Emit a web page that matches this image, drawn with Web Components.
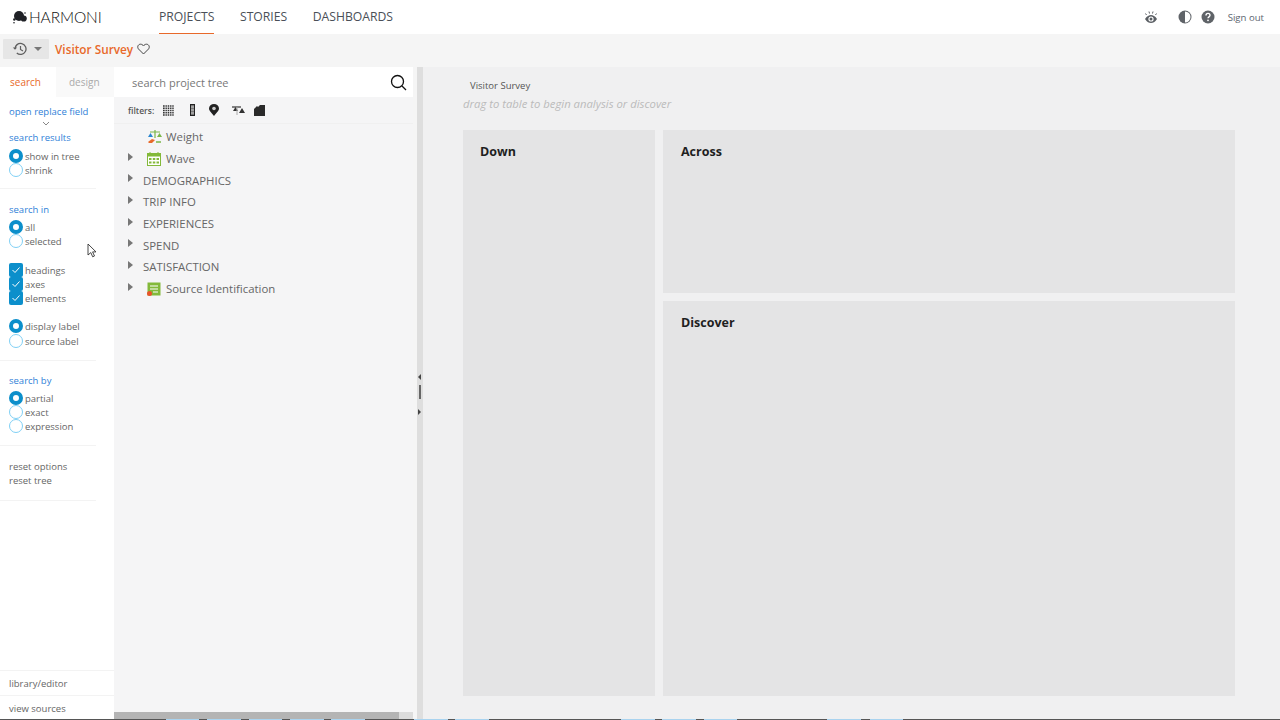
<!DOCTYPE html>
<html><head><meta charset="utf-8"><title>Harmoni</title>
<style>
html,body{margin:0;padding:0;height:100%;overflow:hidden;background:#fff;font-family:"Open Sans","Noto Sans",sans-serif}
</style></head><body>
<hm-app></hm-app>
<script>
const def=(name,css,html)=>customElements.define(name,class extends HTMLElement{
  constructor(){super();this.attachShadow({mode:'open'}).innerHTML=`<style>${css}</style>${html}`;}
});

def('hm-top',`
:host{display:flex;height:34px;background:#fff;align-items:stretch;color:#4a4f57;padding-left:13px}
.logo{display:flex;align-items:center;width:146px;gap:1px;font-size:15.5px;letter-spacing:-.1px;color:#111;font-family:"Lato",sans-serif;font-weight:300}
nav{display:flex;gap:25.5px;font-size:12.2px;font-weight:400}
nav a{display:flex;align-items:center;border-bottom:1px solid transparent;height:33px}
nav a.on{border-bottom-color:#e8692a}
.right{margin-left:auto;display:flex;align-items:center;padding-right:16px;font-size:9.6px;color:#5c6670}
svg{display:block}
`,`
<div class="logo"><svg width="15" height="15" viewBox="0 0 15 15"><circle cx="6" cy="6" r="5" fill="#1f2126"/><circle cx="10.700" cy="8.500" r="3.100" fill="#1f2126"/><circle cx="1.300" cy="9.500" r="1.200" fill="#1f2126"/><circle cx="1" cy="12.800" r=".8" fill="#1f2126"/><circle cx="12" cy="3" r=".8" fill="#1f2126"/></svg><span>HARMONI</span></div>
<nav><a class="on">PROJECTS</a><a>STORIES</a><a>DASHBOARDS</a></nav>
<div class="right">
<svg width="16" height="14" viewBox="0 0 16 14" style="margin-right:19px"><path d="M2 9c2-3 4-4 6-4s4 1 6 4c-2 3-4 4-6 4s-4-1-6-4z" fill="#5b5f64"/><circle cx="8" cy="9" r="2.600" fill="#fff"/><circle cx="8" cy="9" r="1.500" fill="#5b5f64"/><path d="M2.500 3.500l1 1.500M6 1.500l.5 2M10 1.500l-.5 2M13.500 3.500l-1 1.500" stroke="#5b5f64" fill="none"/></svg>
<svg width="14" height="14" viewBox="0 0 14 14" style="margin-right:9px"><circle cx="7" cy="7" r="6.500" fill="#5f6368"/><path d="M7 1.500a5.500 5.500 0 0 1 0 11z" fill="#fff"/></svg>
<svg width="14" height="14" viewBox="0 0 14 14" style="margin-right:13px"><circle cx="7" cy="7" r="6.500" fill="#5f6368"/><path d="M5 5.400c0-1.300 1-2 2-2s2 .7 2 1.900c0 1.500-2 1.600-2 3" fill="none" stroke="#fff" stroke-width="1.400"/><circle cx="7" cy="10.300" r=".9" fill="#fff"/></svg>
<span>Sign out</span></div>`);

def('hm-sub',`
:host{display:flex;height:33px;background:#f5f5f5;align-items:flex-start;padding:5px 0 0 3px;box-sizing:border-box}
.btn{width:46px;height:20px;background:#e6e6e6;display:flex;align-items:center;padding-left:9px;box-sizing:border-box;gap:7px;border-radius:1px;margin-right:6px}
.car{border:4px solid transparent;border-top-color:#777;border-bottom:0}
b{font-weight:600;font-size:11.800px;line-height:20px;color:#e8692a;margin-right:4px}
svg{display:block}
.h{margin-top:4px}
`,`<div class="btn"><svg width="15" height="14" viewBox="0 0 15 14"><path d="M3 7a5.500 5.500 0 1 1 1.800 4" fill="none" stroke="#5f5f5f" stroke-width="1.300"/><path d="M.8 5.500l2.200 2.300 2.200-2.300" fill="#5f5f5f"/><path d="M8.500 4v3.500l2.500 1.500" fill="none" stroke="#5f5f5f" stroke-width="1.200"/></svg><span class="car"></span></div>
<b>Visitor Survey</b><svg class="h" width="13" height="12" viewBox="0 0 13 12"><path d="M6.500 11L1.500 6C0 4.300.8 1.300 3.500 1.200c1.400 0 2.400.8 3 1.800.6-1 1.600-1.800 3-1.800 2.700.1 3.500 3.100 2 4.800z" fill="none" stroke="#444" stroke-width="1"/></svg>`);

def('hm-radio',`
:host{display:flex;align-items:center;height:14px;font-size:9.500px;color:#666}
i{width:14px;height:14px;box-sizing:border-box;border-radius:50%;border:1px solid #7fd0f5;margin-left:9px;margin-right:2px;flex:none;background:#fff}
:host([on]) i{border:4px solid #0c8fcb}
`,`<i></i><slot></slot>`);

def('hm-check',`
:host{display:flex;align-items:center;height:14px;font-size:9.500px;color:#666}
i{width:14px;height:14px;box-sizing:border-box;border-radius:2px;background:#0c8fcb;margin-left:9px;margin-right:2px;flex:none;display:flex;align-items:center;justify-content:center}
svg{display:block}
`,`<i><svg width="10" height="8" viewBox="0 0 10 8"><path d="M1.500 4l2.500 2.500 4.500-5" stroke="#fff" stroke-width="1" fill="none"/></svg></i><slot></slot>`);

def('hm-group',`
:host{display:block;padding:0 0 12px;margin:0 18px 0 0;position:relative;border-bottom:1px solid #f3f3f3}
h4{margin:0 0 3px 9px;font-weight:400;font-size:9.500px;line-height:14px;color:#2f7fd8}
:host([wide]) h4{margin-bottom:4px}
:host([notitle]) h4{display:none}
`,`<h4><slot name="t"></slot></h4><slot></slot>`);

def('hm-left',`
:host{display:flex;flex-direction:column;width:114px;flex:none;background:#fff;font-size:9.500px;color:#666;position:relative;height:100%}
.tabs{display:flex;height:30px;flex:none;font-size:10px;align-items:center}
.tabs span{flex:1;height:30px;display:flex;align-items:center;box-sizing:border-box}
.tabs .a{color:#e8692a;padding-left:10px;flex:0 0 56px}
.tabs .b{color:#aaa;background:#f9f9f9;padding-left:13px}
.rep{color:#2f7fd8;margin:8px 0 0 9px;line-height:14px;height:14px}
.chev{height:12px;margin-left:42px}
.chev svg{display:block;margin-top:2px}
.sp{height:14px;flex:none}
.sp13{height:13px;flex:none}
.spa{height:15px}
.spb{height:14px}
.mt{margin-top:1px}
.act{padding:0 0 0 9px;line-height:14px}
.foot{margin-top:auto}
.foot div{height:25px;border-top:1px solid #f3f3f3;display:flex;align-items:center;padding-left:9px;box-sizing:border-box}
.cursor{position:absolute;left:87px;top:176px}
`,`
<div class="tabs"><span class="a">search</span><span class="b">design</span></div>
<div class="rep">open replace field</div>
<div class="chev"><svg width="8" height="5" viewBox="0 0 8 5"><path d="M1 1l3 3 3-3" fill="none" stroke="#888"/></svg></div>
<hm-group wide style="padding-bottom:11px"><span slot="t">search results</span><hm-radio on>show in tree</hm-radio><hm-radio>shrink</hm-radio></hm-group>
<div class="sp"></div>
<hm-group><span slot="t">search in</span>
<hm-radio on>all</hm-radio><hm-radio>selected</hm-radio>
<div class="spa"></div>
<hm-check>headings</hm-check><hm-check>axes</hm-check><hm-check>elements</hm-check>
<div class="spb"></div>
<hm-radio on>display label</hm-radio><hm-radio class="mt">source label</hm-radio>
</hm-group>
<div class="sp13"></div>
<hm-group><span slot="t">search by</span><hm-radio on>partial</hm-radio><hm-radio>exact</hm-radio><hm-radio>expression</hm-radio></hm-group>
<div class="sp"></div>
<hm-group notitle><div class="act">reset options</div><div class="act">reset tree</div></hm-group>
<div class="foot"><div>library/editor</div><div>view sources</div></div>
<svg class="cursor" width="10" height="15" viewBox="0 0 10 15"><path d="M1 1v11l2.800-2.400 1.900 4.200 1.800-.8-1.900-4.100H9z" fill="#fff" stroke="#333" stroke-width=".9"/></svg>`);

def('hm-row',`
:host{display:flex;align-items:center;height:21.700px;font-size:11.400px;color:#666;position:relative;padding-left:29px}
.arr{position:absolute;left:14px;top:5px;border-left:5px solid #777;border-top:4px solid transparent;border-bottom:4px solid transparent}
:host([noarrow]) .arr{display:none}
::slotted(svg){margin-right:4px;margin-left:4px}
`,`<span class="arr"></span><slot></slot>`);

def('hm-tree',`
:host{display:flex;flex-direction:column;width:299px;flex:none;background:#f5f5f6;position:relative;height:100%}
.s{height:30px;background:#fff;display:flex;align-items:center;padding-left:18px;font-size:11px;color:#777;flex:none;justify-content:space-between;padding-right:6px}
.f{height:26px;display:flex;align-items:center;padding-left:14px;font-size:8.500px;font-weight:600;color:#555;border-bottom:1px solid #f0f0f0;flex:none}
.f svg{display:block;flex:none}
.list{padding-top:2px}
.bar{position:absolute;left:0;right:0;bottom:0;height:8px;background:#dcdcdc}
.bar i{display:block;height:100%;width:285px;background:#b4b4b4}
`,`
<div class="s"><span>search project tree</span><svg width="17" height="17" viewBox="0 0 17 17"><circle cx="7.500" cy="7.500" r="6" fill="none" stroke="#111" stroke-width="1.300"/><path d="M12 12l4 4" stroke="#111" stroke-width="1.300"/></svg></div>
<div class="f"><span style="margin-right:9px">filters:</span>
<svg width="11" height="11" viewBox="0 0 11 11" style="margin-right:15.500px"><path d="M0 1h11M0 3.250h11M0 5.500h11M0 7.750h11M0 10h11" stroke="#333" stroke-width="1.400"/><path d="M1 0v11M3.250 0v11M5.500 0v11M7.750 0v11M10 0v11" stroke="#f5f5f6" stroke-width=".8" transform="translate(1.100 0)"/></svg>
<svg width="5" height="12" viewBox="0 0 5 12" style="margin-right:14.500px"><rect x=".5" y=".5" width="4" height="11" fill="#777" stroke="#222"/><path d="M1 3h3M1 6h3M1 9h3" stroke="#ccc"/></svg>
<svg width="10" height="12" viewBox="0 0 10 12" style="margin-right:13px"><path d="M5 12C3 9 0 7 0 4.500a5 4.500 0 0 1 10 0C10 7 7 9 5 12z" fill="#222"/><circle cx="5" cy="4.500" r="1.800" fill="#ccc"/></svg>
<svg width="13" height="10" viewBox="0 0 13 10" style="margin-right:9px"><path d="M0 2h9" stroke="#333" stroke-width="1.200"/><path d="M1 6l2.500-4L6 6zM7 8l3-5 3 5z" fill="#333"/><path d="M5 2v8" stroke="#aaa"/></svg>
<svg width="11" height="11" viewBox="0 0 11 11"><path d="M0 4l3-3 1 1 2-2h5v11H0z" fill="#2a2a2a"/></svg></div>
<div class="list">
<hm-row noarrow><svg width="16" height="15" viewBox="0 0 16 15" style="margin-right:3px"><path d="M8 1v8M3 3h10" stroke="#7ab648" stroke-width="1.200"/><path d="M1 8l2.500-4L6 8z" fill="#2a86d0"/><path d="M10 8l2.500-4L15 8z" fill="#7ab648"/><path d="M1 13l4-3 3 1-3 3H2z" fill="#e8692a"/><path d="M9 13h5" stroke="#7ab648" stroke-width="1.500"/></svg><span>Weight</span></hm-row>
<hm-row><svg width="14" height="14" viewBox="0 0 14 14"><rect x=".5" y="1.500" width="13" height="12" fill="#fff" stroke="#83b93a"/><rect x="0" y="1" width="14" height="3.500" fill="#83b93a"/><path d="M3 0v2M11 0v2" stroke="#83b93a"/><path d="M2 6h2.500v2H2zM5.800 6h2.500v2H5.800zM9.500 6H12v2H9.500zM2 9.500h2.500v2H2zM5.800 9.500h2.500v2H5.800zM9.500 9.500H12v2H9.500z" fill="#83b93a"/></svg><span style="margin-left:1px">Wave</span></hm-row>
<hm-row>DEMOGRAPHICS</hm-row><hm-row>TRIP INFO</hm-row><hm-row>EXPERIENCES</hm-row><hm-row>SPEND</hm-row><hm-row>SATISFACTION</hm-row>
<hm-row><svg width="14" height="14" viewBox="0 0 14 14"><rect x=".5" y=".5" width="13" height="13" fill="#83b93a"/><path d="M3 4h8M3 7h8M6 10h5" stroke="#fff"/><circle cx="2.500" cy="11.500" r="2.500" fill="#e8542a"/></svg><span style="margin-left:1px">Source Identification</span></hm-row>
</div>
<div class="bar"><i></i></div>`);

def('hm-split',`
:host{display:block;width:6px;flex:none;background:#dedede;position:relative;height:100%;margin-left:4px}
.a,.b{position:absolute;left:1px;border-top:3px solid transparent;border-bottom:3px solid transparent}
.a{top:307px;border-right:3px solid #444}
.b{top:342px;border-left:3px solid #444}
.m{position:absolute;left:2px;top:318px;width:2px;height:14px;background:#666}
`,`<span class="a"></span><span class="m"></span><span class="b"></span>`);

def('hm-drop',`
:host{display:block;background:#e4e4e5;padding:12.500px 18px;box-sizing:border-box;font-size:12.500px;font-weight:700;color:#1f1f1f;line-height:18px}
`,`<slot></slot>`);

def('hm-work',`
:host{display:flex;flex-direction:column;flex:1;min-width:0;background:#f0f0f1;height:100%;padding:12px 45px 24px 40px;box-sizing:border-box}
.t{font-size:9.500px;color:#555;margin-left:7px;line-height:14px}
.h{font-size:11.300px;font-style:italic;color:#bbb;line-height:16px;margin-top:3px}
.g{display:grid;grid-template-columns:192px 572px;grid-template-rows:163px 1fr;gap:8px;margin-top:18px;flex:1;min-height:0}
.d{grid-row:1 / span 2;padding-left:17px}
`,`<div class="t">Visitor Survey</div><div class="h">drag to table to begin analysis or discover</div>
<div class="g"><hm-drop class="d">Down</hm-drop><hm-drop>Across</hm-drop><hm-drop>Discover</hm-drop></div>`);

const segs=[[166,199],[207,241],[249,282],[290,324],[331,365],[414,448],[455,489],[621,655],[662,696],[704,737],[827,861],[870,903]];
let g='',p=0;for(const[a,b]of segs){g+=`#555 ${p}px ${a}px,#a9d3ef ${a}px ${b}px,`;p=b;}g+=`#555 ${p}px 1280px`;
def('hm-app',`
:host{display:flex;flex-direction:column;width:1280px;height:720px;overflow:hidden;position:relative}
.main{flex:1;display:flex;min-height:0;background:#f5f5f5}
.line{position:absolute;left:0;right:0;bottom:0;height:1px;background:linear-gradient(90deg,${g})}
`,`<hm-top></hm-top><hm-sub></hm-sub><div class="main"><hm-left></hm-left><hm-tree></hm-tree><hm-split></hm-split><hm-work></hm-work></div><div class="line"></div>`);
</script>
</body></html>
